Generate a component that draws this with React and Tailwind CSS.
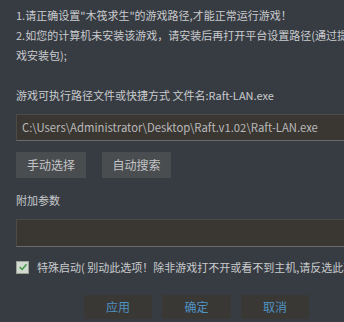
const font = { fontFamily: '"Noto Sans CJK SC", "Liberation Sans", sans-serif' };

const App = () => {
  return (
    <div
      className="w-[344px] h-[322px] overflow-hidden bg-[#373c43] text-[#c9cbcd] text-[11px]"
      style={font}
    >
      <div className="pl-[16px] pt-[5px] leading-[20px] whitespace-nowrap">
        <p>1.请正确设置"木筏求生"的游戏路径,才能正常运行游戏！</p>
        <p>2.如您的计算机未安装该游戏，请安装后再打开平台设置路径(通过提</p>
        <p>戏安装包);</p>
      </div>

      <div className="pl-[16px] mt-[20px] leading-[20px] whitespace-nowrap">
        游戏可执行路径文件或快捷方式 文件名:Raft-LAN.exe
      </div>

      <div className="ml-[16px] mt-[9px] h-[27px] w-[340px] bg-[#3a3733] border border-[#4d4b48] border-b-[#6b6b6b] flex items-center pl-[5px] text-[11.3px] text-[#b9b9b9] whitespace-nowrap">
        C:\Users\Administrator\Desktop\Raft.v1.02\Raft-LAN.exe
      </div>

      <div className="pl-[16px] mt-[11px] flex gap-[16px]">
        <button className="w-[70px] h-[26px] bg-[#4a4d50] text-[#c2c4c6] text-[12px]">手动选择</button>
        <button className="w-[69px] h-[26px] bg-[#4a4d50] text-[#c2c4c6] text-[12px]">自动搜索</button>
      </div>

      <div className="pl-[16px] mt-[12px] leading-[20px]">附加参数</div>

      <div className="ml-[16px] mt-[9px] h-[28px] w-[340px] bg-[#3a3733] border border-[#4d4b48] border-b-[#6b6b6b]" />

      <div className="pl-[16px] mt-[12px] flex items-center gap-[8px] whitespace-nowrap">
        <span className="w-[13px] h-[13px] shrink-0 bg-[#d3d8d0] border border-[#9aa296] flex items-center justify-center">
          <svg viewBox="0 0 12 12" className="w-[10px] h-[10px]">
            <path d="M2 6.2 L5 9 L10.2 2.8" fill="none" stroke="#3f9a47" strokeWidth="1.8" />
          </svg>
        </span>
        <span>特殊启动( 别动此选项！除非游戏打不开或看不到主机,请反选此项</span>
      </div>

      <div className="mt-[19px] flex pl-[84px] gap-[10px]">
        <button className="w-[68px] h-[24px] bg-[#393835] text-[#4f93c4] text-[12px]">应用</button>
        <button className="w-[69px] h-[24px] bg-[#393835] text-[#4f93c4] text-[12px]">确定</button>
        <button className="w-[68px] h-[24px] bg-[#393835] text-[#4f93c4] text-[12px]">取消</button>
      </div>
    </div>
  );
};

export default App;
